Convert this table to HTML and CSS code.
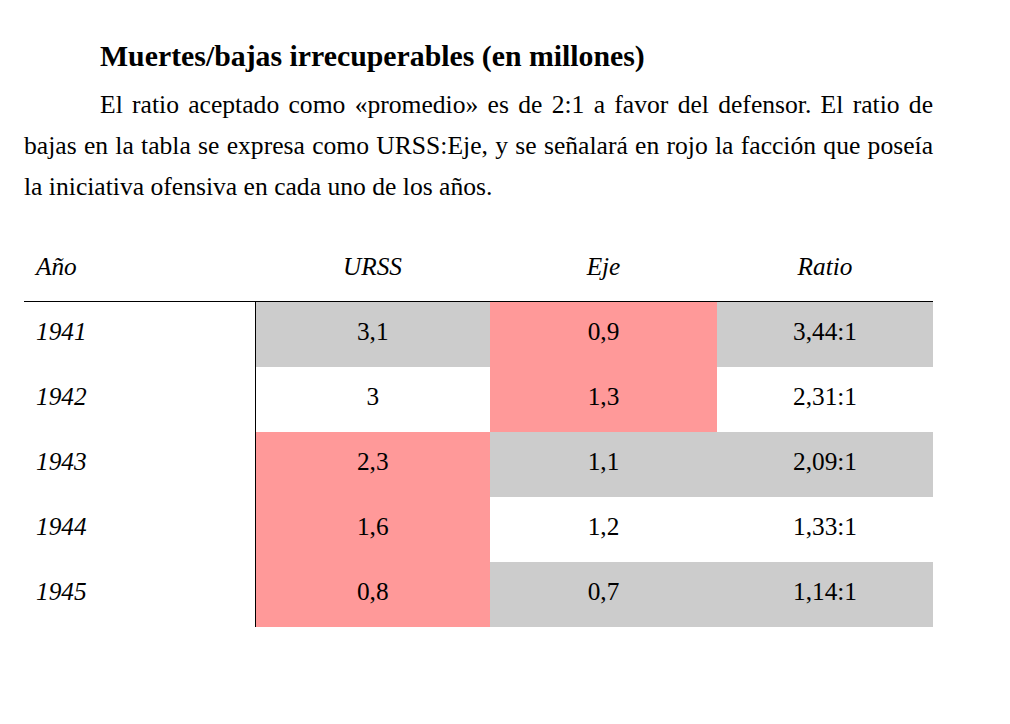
FILE: index.html
```html
<!DOCTYPE html>
<html lang="es">
<head>
<meta charset="utf-8">
<link rel="stylesheet" href="styles.css">
</head>
<body>
<main class="page">
  <h1 class="title">Muertes/bajas irrecuperables (en millones)</h1>
  <p class="text">El ratio aceptado como «promedio» es de 2:1 a favor del defensor. El ratio de bajas en la tabla se expresa como URSS:Eje, y se señalará en rojo la facción que poseía la iniciativa ofensiva en cada uno de los años.</p>
  <table class="losses">
    <colgroup>
      <col class="c1"><col class="c2"><col class="c3"><col class="c4">
    </colgroup>
    <thead>
      <tr><th class="year">Año</th><th>URSS</th><th>Eje</th><th>Ratio</th></tr>
    </thead>
    <tbody>
      <tr><td class="year">1941</td><td class="g first">3,1</td><td class="r">0,9</td><td class="g">3,44:1</td></tr>
      <tr><td class="year">1942</td><td class="first">3</td><td class="r">1,3</td><td>2,31:1</td></tr>
      <tr><td class="year">1943</td><td class="r first">2,3</td><td class="g">1,1</td><td class="g">2,09:1</td></tr>
      <tr><td class="year">1944</td><td class="r first">1,6</td><td>1,2</td><td>1,33:1</td></tr>
      <tr><td class="year">1945</td><td class="r first">0,8</td><td class="g">0,7</td><td class="g">1,14:1</td></tr>
    </tbody>
  </table>
</main>
</body>
</html>
```
FILE: styles.css
```css
html, body {
  margin: 0;
  padding: 0;
  background: #ffffff;
}
body {
  font-family: "Liberation Serif", "Times New Roman", serif;
  color: #000000;
}
.page {
  width: 909px;
  padding: 36px 0 0 24px;
}
.title {
  font-size: 29.8px;
  font-weight: bold;
  margin: 0 0 0 76px;
  line-height: 40px;
}
.text {
  font-size: 25.6px;
  line-height: 41px;
  margin: 8px 0 0 0;
  text-indent: 76px;
  text-align: justify;
}
.losses {
  margin-top: 30px;
  width: 909px;
  border-collapse: collapse;
  font-size: 25.3px;
  table-layout: fixed;
}
.c1 { width: 231px; }
.c2 { width: 235px; }
.c3 { width: 227px; }
.c4 { width: 216px; }
.losses th {
  font-style: italic;
  font-weight: normal;
  height: 59px;
  padding: 0 0 5px 0;
  text-align: center;
  border-bottom: 1px solid #000000;
}
.losses td {
  height: 59px;
  padding: 0 0 6px 0;
  text-align: center;
}
.losses .year {
  text-align: left;
  font-style: italic;
  padding-left: 12px;
}
.losses .first {
  border-left: 1px solid #000000;
}
.g { background: #cccccc; }
.r { background: #ff9999; }
```
